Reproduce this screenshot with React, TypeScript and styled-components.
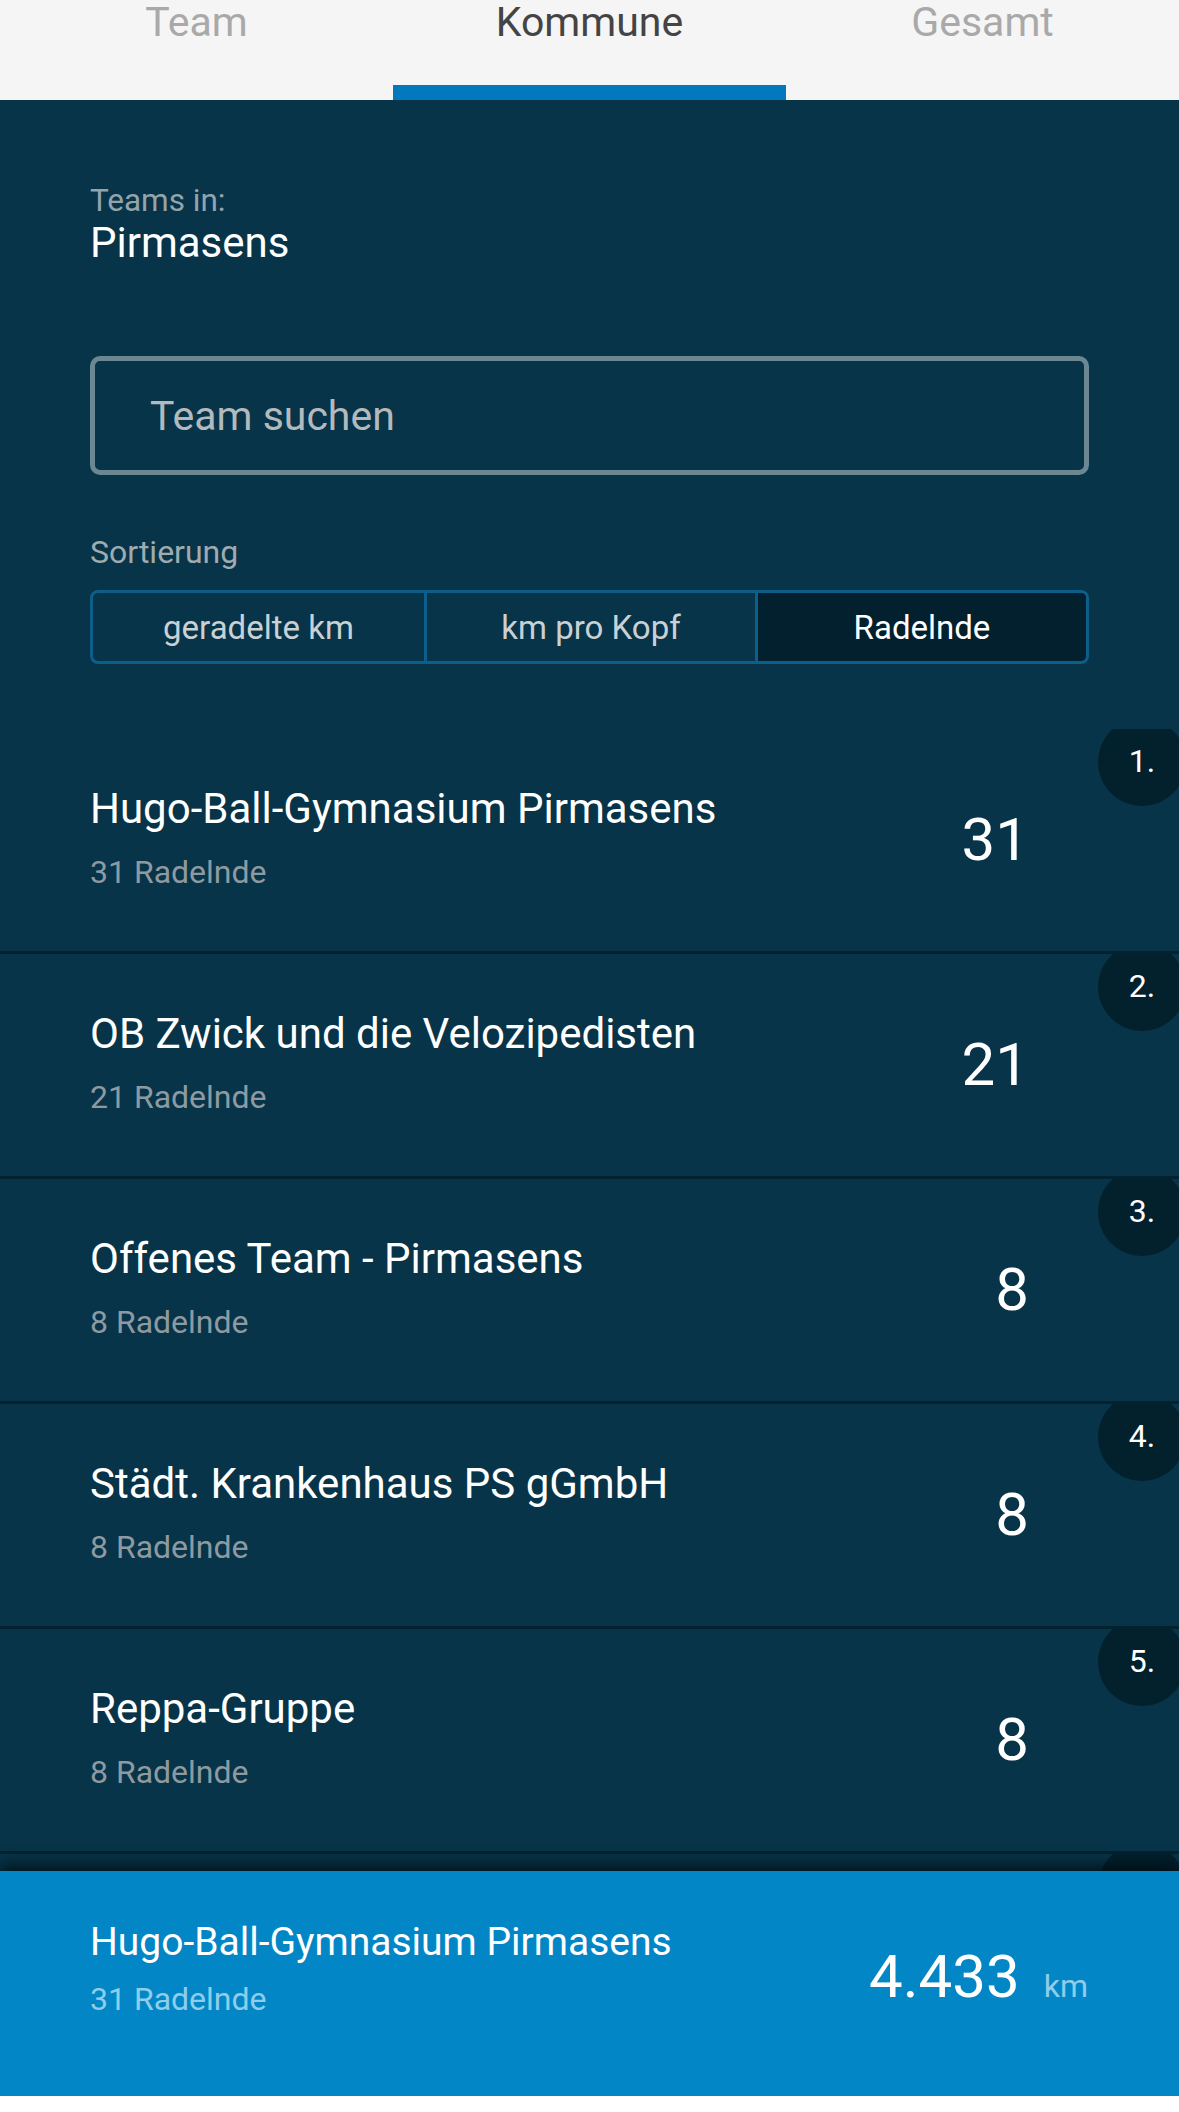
import React from "react";
import styled, { createGlobalStyle } from "styled-components";

const Global = createGlobalStyle`
  html, body { margin: 0; padding: 0; background: #ffffff; }
  body { font-family: Roboto, "Liberation Sans", Arial, sans-serif; }
  * { box-sizing: border-box; }
`;

const Page = styled.div`
  width: 1179px;
  display: flex;
  flex-direction: column;
`;

const TabBar = styled.nav`
  height: 100px;
  background: #f5f5f5;
  display: grid;
  grid-template-columns: repeat(3, 1fr);
`;

const Tab = styled.div<{ $active?: boolean }>`
  display: flex;
  flex-direction: column;
  justify-content: space-between;
  align-items: center;
  font-size: 41px;
  line-height: 44px;
  color: ${(p) => (p.$active ? "#444444" : "#a9a9a9")};
`;

const Indicator = styled.div<{ $active?: boolean }>`
  align-self: stretch;
  height: 15px;
  background: ${(p) => (p.$active ? "#0279bd" : "transparent")};
`;

const Main = styled.main`
  background: #073448;
  display: flex;
  flex-direction: column;
`;

const Header = styled.section`
  padding: 82px 90px 0;
  display: flex;
  flex-direction: column;
`;

const Caption = styled.div`
  font-size: 31.5px;
  line-height: 38px;
  color: #93a4ad;
`;

const Place = styled.div`
  font-size: 42px;
  line-height: 46px;
  color: #ffffff;
`;

const Search = styled.div`
  margin-top: 90px;
  height: 119px;
  border: 5px solid #6a8792;
  border-radius: 10px;
  display: flex;
  align-items: center;
  padding-left: 55px;
  font-size: 41px;
  color: #b3babd;
`;

const Label = styled.div`
  margin-top: 58px;
  font-size: 32px;
  line-height: 38px;
  color: #a0abb0;
`;

const Segments = styled.div`
  margin-top: 19px;
  height: 74px;
  border: 3px solid #0b5f8a;
  border-radius: 8px;
  overflow: hidden;
  display: grid;
  grid-template-columns: repeat(3, 1fr);
`;

const Segment = styled.div<{ $active?: boolean }>`
  display: flex;
  align-items: center;
  justify-content: center;
  font-size: 33px;
  color: ${(p) => (p.$active ? "#ffffff" : "#c9d1d5")};
  background: ${(p) => (p.$active ? "#02202d" : "transparent")};
  & + & {
    border-left: 3px solid #0b5f8a;
  }
`;

const List = styled.div`
  margin-top: 65px;
  height: 1142px;
  overflow: hidden;
  display: flex;
  flex-direction: column;
`;

const Row = styled.div`
  flex: none;
  position: relative;
  overflow: hidden;
  height: 225px;
  border-bottom: 3px solid #03222f;
  padding: 0 150px 4px 90px;
  display: flex;
  align-items: center;
  justify-content: space-between;
`;

const RowText = styled.div`
  display: flex;
  flex-direction: column;
`;

const RowTitle = styled.div`
  font-size: 42px;
  line-height: 48px;
  color: #ffffff;
`;

const RowSub = styled.div`
  margin-top: 20px;
  font-size: 32px;
  line-height: 38px;
  color: #8e9aa1;
`;

const RowValue = styled.div`
  font-size: 60px;
  line-height: 70px;
  margin-top: 4px;
  color: #ffffff;
`;

const Badge = styled.div`
  position: absolute;
  top: -11px;
  right: -7px;
  width: 88px;
  height: 88px;
  border-radius: 50%;
  background: #03202d;
  color: #ffffff;
  font-size: 32px;
  display: flex;
  align-items: center;
  justify-content: center;
  padding-bottom: 2px;
`;

const Footer = styled.footer`
  position: relative;
  z-index: 1;
  height: 225px;
  background: #0286c6;
  box-shadow: 0 -6px 14px rgba(0, 10, 16, 0.75);
  padding: 0 91px 30px 90px;
  display: flex;
  align-items: center;
  justify-content: space-between;
`;

const FooterTitle = styled.div`
  font-size: 39px;
  line-height: 44px;
  color: #ffffff;
`;

const FooterSub = styled.div`
  margin-top: 16px;
  font-size: 32px;
  line-height: 38px;
  color: #8fcdea;
`;

const Distance = styled.div`
  display: flex;
  align-items: baseline;
  gap: 24px;
  margin-top: 16px;
`;

const DistanceValue = styled.span`
  font-size: 60px;
  line-height: 70px;
  color: #ffffff;
`;

const Unit = styled.span`
  font-size: 32px;
  color: #8fcdea;
`;

const teams = [
  { name: "Hugo-Ball-Gymnasium Pirmasens", riders: 31 },
  { name: "OB Zwick und die Velozipedisten", riders: 21 },
  { name: "Offenes Team - Pirmasens", riders: 8 },
  { name: "Städt. Krankenhaus PS gGmbH", riders: 8 },
  { name: "Reppa-Gruppe", riders: 8 },
];

export default function App() {
  return (
    <Page>
      <Global />
      <TabBar>
        {["Team", "Kommune", "Gesamt"].map((t) => (
          <Tab key={t} $active={t === "Kommune"}>
            <span>{t}</span>
            <Indicator $active={t === "Kommune"} />
          </Tab>
        ))}
      </TabBar>
      <Main>
        <Header>
          <Caption>Teams in:</Caption>
          <Place>Pirmasens</Place>
          <Search>Team suchen</Search>
          <Label>Sortierung</Label>
          <Segments>
            <Segment>geradelte km</Segment>
            <Segment>km pro Kopf</Segment>
            <Segment $active>Radelnde</Segment>
          </Segments>
        </Header>
        <List>
          {teams.map((t, i) => (
            <Row key={t.name}>
              <RowText>
                <RowTitle>{t.name}</RowTitle>
                <RowSub>{t.riders} Radelnde</RowSub>
              </RowText>
              <RowValue>{t.riders}</RowValue>
              <Badge>{i + 1}.</Badge>
            </Row>
          ))}
          <Row>
            <Badge />
          </Row>
        </List>
      </Main>
      <Footer>
        <RowText>
          <FooterTitle>Hugo-Ball-Gymnasium Pirmasens</FooterTitle>
          <FooterSub>31 Radelnde</FooterSub>
        </RowText>
        <Distance>
          <DistanceValue>4.433</DistanceValue>
          <Unit>km</Unit>
        </Distance>
      </Footer>
    </Page>
  );
}
